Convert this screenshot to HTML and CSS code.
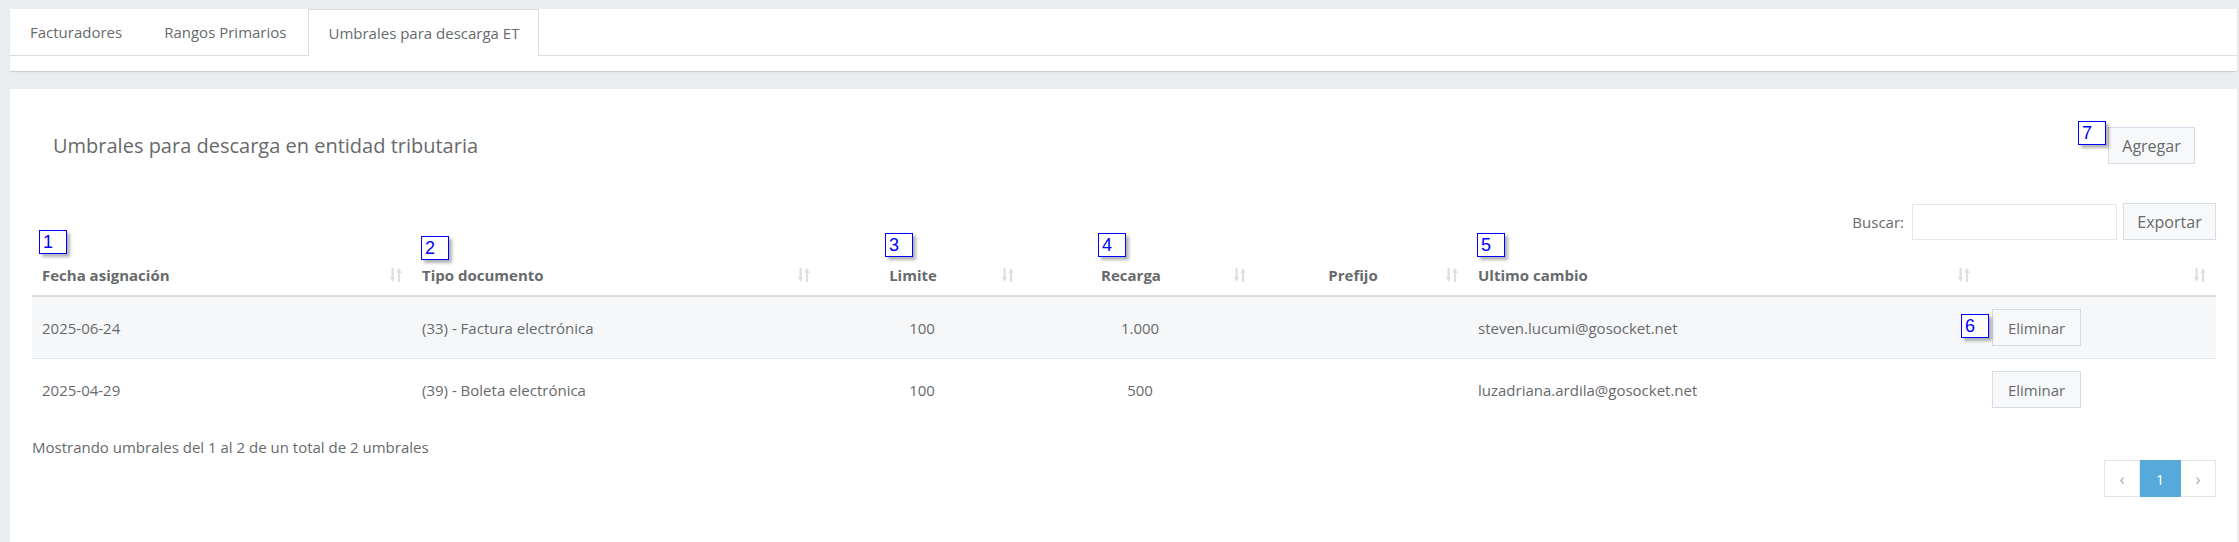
FILE: index.html
```html
<!DOCTYPE html>
<html lang="es">
<head>
    <meta charset="UTF-8">
    <title>Umbrales para descarga ET</title>
    <link rel="stylesheet" href="styles.css">
</head>
<body>
    <div class="page">
        <div class="tabs-box">
            <ul class="tabs">
                <li><a href="#">Facturadores</a></li>
                <li><a href="#">Rangos Primarios</a></li>
                <li class="active"><a href="#">Umbrales para descarga ET</a></li>
            </ul>
        </div>

        <div class="panel">
            <div class="panel-head">
                <h5>Umbrales para descarga en entidad tributaria</h5>
                <button class="btn btn-add">Agregar</button>
            </div>

            <div class="controls">
                <label>Buscar:</label>
                <input type="text">
                <button class="btn">Exportar</button>
            </div>

            <table class="grid">
                <colgroup>
                    <col style="width:380px">
                    <col style="width:408px">
                    <col style="width:204px">
                    <col style="width:232px">
                    <col style="width:212px">
                    <col style="width:512px">
                    <col style="width:236px">
                </colgroup>
                <thead>
                    <tr>
                        <th><div class="th-in"><span class="lbl">Fecha asignación</span><svg class="sort"><use href="#sort"/></svg></div></th>
                        <th><div class="th-in"><span class="lbl">Tipo documento</span><svg class="sort"><use href="#sort"/></svg></div></th>
                        <th class="center"><div class="th-in"><span class="lbl">Limite</span><svg class="sort"><use href="#sort"/></svg></div></th>
                        <th class="center"><div class="th-in"><span class="lbl">Recarga</span><svg class="sort"><use href="#sort"/></svg></div></th>
                        <th class="center"><div class="th-in"><span class="lbl">Prefijo</span><svg class="sort"><use href="#sort"/></svg></div></th>
                        <th><div class="th-in"><span class="lbl">Ultimo cambio</span><svg class="sort"><use href="#sort"/></svg></div></th>
                        <th><div class="th-in"><span class="lbl"></span><svg class="sort"><use href="#sort"/></svg></div></th>
                    </tr>
                </thead>
                <tbody>
                    <tr class="odd">
                        <td>2025-06-24</td>
                        <td>(33) - Factura electrónica</td>
                        <td class="center">100</td>
                        <td class="center">1.000</td>
                        <td class="center"></td>
                        <td>steven.lucumi@gosocket.net</td>
                        <td><button class="btn btn-sm">Eliminar</button></td>
                    </tr>
                    <tr>
                        <td>2025-04-29</td>
                        <td>(39) - Boleta electrónica</td>
                        <td class="center">100</td>
                        <td class="center">500</td>
                        <td class="center"></td>
                        <td>luzadriana.ardila@gosocket.net</td>
                        <td><button class="btn btn-sm">Eliminar</button></td>
                    </tr>
                </tbody>
            </table>

            <div class="info">Mostrando umbrales del 1 al 2 de un total de 2 umbrales</div>

            <div class="pager">
                <a href="#" class="pg">&lsaquo;</a>
                <a href="#" class="pg active">1</a>
                <a href="#" class="pg">&rsaquo;</a>
            </div>
        </div>

        <!-- marcadores de anotación -->
        <span class="mark m1">1</span>
        <span class="mark m2">2</span>
        <span class="mark m3">3</span>
        <span class="mark m4">4</span>
        <span class="mark m5">5</span>
        <span class="mark m6">6</span>
        <span class="mark m7">7</span>
    </div>

    <svg width="0" height="0" style="position:absolute">
        <symbol id="sort" viewBox="0 0 12 14">
            <rect x="1.5" y="0" width="2.2" height="10" />
            <polygon points="0,9 5.2,9 2.6,14" />
            <polygon points="6.3,5 11.5,5 8.9,0" />
            <rect x="7.8" y="4" width="2.2" height="10" />
        </symbol>
    </svg>
</body>
</html>
```

FILE: styles.css
```css
body {
    margin: 0;
    background-color: #e9edf0;
    font-family: 'Open Sans', 'Liberation Sans', sans-serif;
    font-size: 15px;
    color: #676a6c;
    overflow: hidden;
}
.page {
    position: relative;
    padding: 9px 2px 0 10px;
}
.tabs-box {
    background: #fff;
    height: 62px;
    box-shadow: 0 1px 1px rgba(0,0,0,0.12);
}
.tabs {
    list-style: none;
    margin: 0;
    padding: 0;
    display: flex;
    height: 46px;
    border-bottom: 1px solid #ddd;
}
.tabs li {
    margin-bottom: -1px;
    margin-right: 2px;
}
.tabs a {
    display: flex;
    align-items: center;
    height: 46px;
    padding: 0 19px 0 19px;
    color: #676a6c;
    text-decoration: none;
    border: 1px solid transparent;
    border-top: none;
}
.tabs li.active a {
    background: #fff;
    border-color: #ddd;
    border-bottom-color: #fff;
    border-top: 1px solid #ddd;
}
.panel {
    box-sizing: border-box;
    background: #fff;
    margin-top: 18px;
    padding: 38px 21px 0 22px;
    height: calc(100vh - 89px);
}
.panel-head {
    display: flex;
    justify-content: space-between;
    align-items: center;
    padding: 0 21px;
}
.panel-head h5 {
    margin: 0;
    font-size: 20px;
    font-weight: 400;
    color: #676a6c;
}
.btn {
    font-family: 'Open Sans', 'Liberation Sans', sans-serif;
    font-size: 16px;
    color: #676a6c;
    background: #f7f8f9;
    border: 1px solid #d5dce5;
    border-radius: 0;
    height: 37px;
    padding: 0 12px;
    cursor: pointer;
}
.btn-add {
    width: 87px;
    padding: 0;
}
.controls {
    display: flex;
    justify-content: flex-end;
    align-items: center;
    margin-top: 39px;
    margin-bottom: 17px;
    gap: 6px;
}
.controls label {
    margin-right: 2px;
}
.controls input {
    width: 203px;
    height: 34px;
    border: 1px solid #e5e6e7;
    padding: 0;
}
.controls .btn {
    width: 93px;
}
.grid {
    width: 100%;
    table-layout: fixed;
    border-collapse: collapse;
}
.grid th {
    padding: 8px 10px 10px;
    line-height: 20px;
    font-weight: 700;
    font-size: 15px;
    text-align: left;
    border-bottom: 2px solid #dddddd;
}
.th-in {
    display: flex;
    align-items: center;
}
.th-in .lbl {
    flex: 1;
}
.grid th.center .lbl {
    text-align: center;
}
.sort {
    width: 12px;
    height: 14px;
    fill: #dedede;
    margin-left: 6px;
}
.grid td {
    padding: 12px 10px;
    line-height: 20px;
    height: 37px;
    vertical-align: middle;
    border-top: 1px solid #e7eaec;
}
.grid thead + tbody tr:first-child td {
    border-top: none;
}
.grid tr.odd td {
    background: #f6f7f9;
}
.grid td.center {
    text-align: center;
}
.btn-sm {
    width: 89px;
    padding: 0;
    margin-left: 2px;
    font-size: 15px;
}
.info {
    margin-top: 17px;
    line-height: 20px;
}
.pager {
    display: flex;
    justify-content: flex-end;
    margin-top: 3px;
}
.pg {
    display: flex;
    align-items: center;
    justify-content: center;
    height: 35px;
    width: 34px;
    border: 1px solid #e5e5e5;
    color: #aaa;
    text-decoration: none;
    font-size: 17px;
}
.pg + .pg {
    border-left: none;
}
.pg.active {
    width: 40px;
    background: #56a9da;
    border-color: #56a9da;
    color: #fff;
    font-size: 15px;
}
.mark {
    position: absolute;
    width: 23px;
    height: 22px;
    border: 1px solid #0000ff;
    background: #fff;
    color: #0000ff;
    font-family: 'Liberation Sans', Arial, sans-serif;
    font-size: 18px;
    line-height: 22px;
    padding-left: 3px;
    box-sizing: content-box;
    box-shadow: 3px 3px 3px rgba(0,0,0,0.3);
}
.m1 { left: 39px; top: 230px; }
.m2 { left: 421px; top: 236px; }
.m3 { left: 885px; top: 233px; }
.m4 { left: 1098px; top: 233px; }
.m5 { left: 1477px; top: 233px; }
.m6 { left: 1961px; top: 314px; }
.m7 { left: 2078px; top: 121px; }
```
